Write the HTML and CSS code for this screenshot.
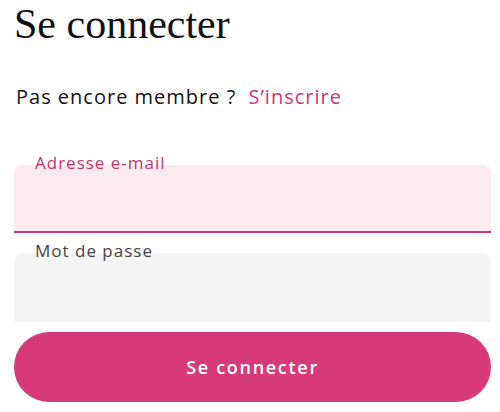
FILE: index.html
```html
<!DOCTYPE html>
<html lang="fr">
<head>
<meta charset="utf-8">
<title>Se connecter</title>
<link rel="stylesheet" href="styles.css">
</head>
<body>
<main class="page">
  <h1 class="title">Se connecter</h1>
  <p class="signup">Pas encore membre ? <a class="signup-link" href="#">S’inscrire</a></p>
  <form class="form">
    <div class="field field-active">
      <label class="field-label" for="email">Adresse e-mail</label>
      <input class="field-input" id="email" type="email">
    </div>
    <div class="field">
      <label class="field-label" for="pwd">Mot de passe</label>
      <input class="field-input" id="pwd" type="password">
    </div>
    <button class="submit" type="button">Se connecter</button>
  </form>
</main>
</body>
</html>
```
FILE: styles.css
```css
html, body {
  margin: 0;
  padding: 0;
  background: #ffffff;
}
.page {
  padding: 0 9px 0 14px;
  font-family: "Open Sans", "Liberation Sans", sans-serif;
  color: #141414;
}
.title {
  margin: 0;
  font-family: "Liberation Serif", serif;
  font-weight: 400;
  font-size: 42px;
  line-height: 48px;
  color: #111;
}
.signup {
  margin: 37px 0 0 2px;
  font-size: 20px;
  line-height: 24px;
  letter-spacing: 1px;
}
.signup-link {
  margin-left: 6px;
  color: #c8397a;
  text-decoration: none;
}
.form {
  display: flex;
  flex-direction: column;
  margin-top: 56px;
}
.field {
  position: relative;
  height: 69px;
  background: #f5f5f5;
  border-radius: 8px 8px 0 0;
}
.field + .field {
  margin-top: 20px;
}
.field-active {
  height: 66px;
  background: #fceaf1;
  border-bottom: 2px solid #c83a74;
}
.field-label {
  position: absolute;
  left: 21px;
  top: -13px;
  font-size: 17px;
  line-height: 22px;
  letter-spacing: 1px;
  color: #444;
}
.field-active .field-label {
  color: #c8336f;
}
.field-input {
  display: block;
  width: 100%;
  height: 100%;
  box-sizing: border-box;
  border: 0;
  background: transparent;
  outline: none;
}
.submit {
  margin-top: 10px;
  height: 70px;
  border: 0;
  border-radius: 35px;
  background: #d73a78;
  color: #fff;
  font-family: "Open Sans", "Liberation Sans", sans-serif;
  font-weight: 600;
  font-size: 18px;
  letter-spacing: 1.7px;
}
```
